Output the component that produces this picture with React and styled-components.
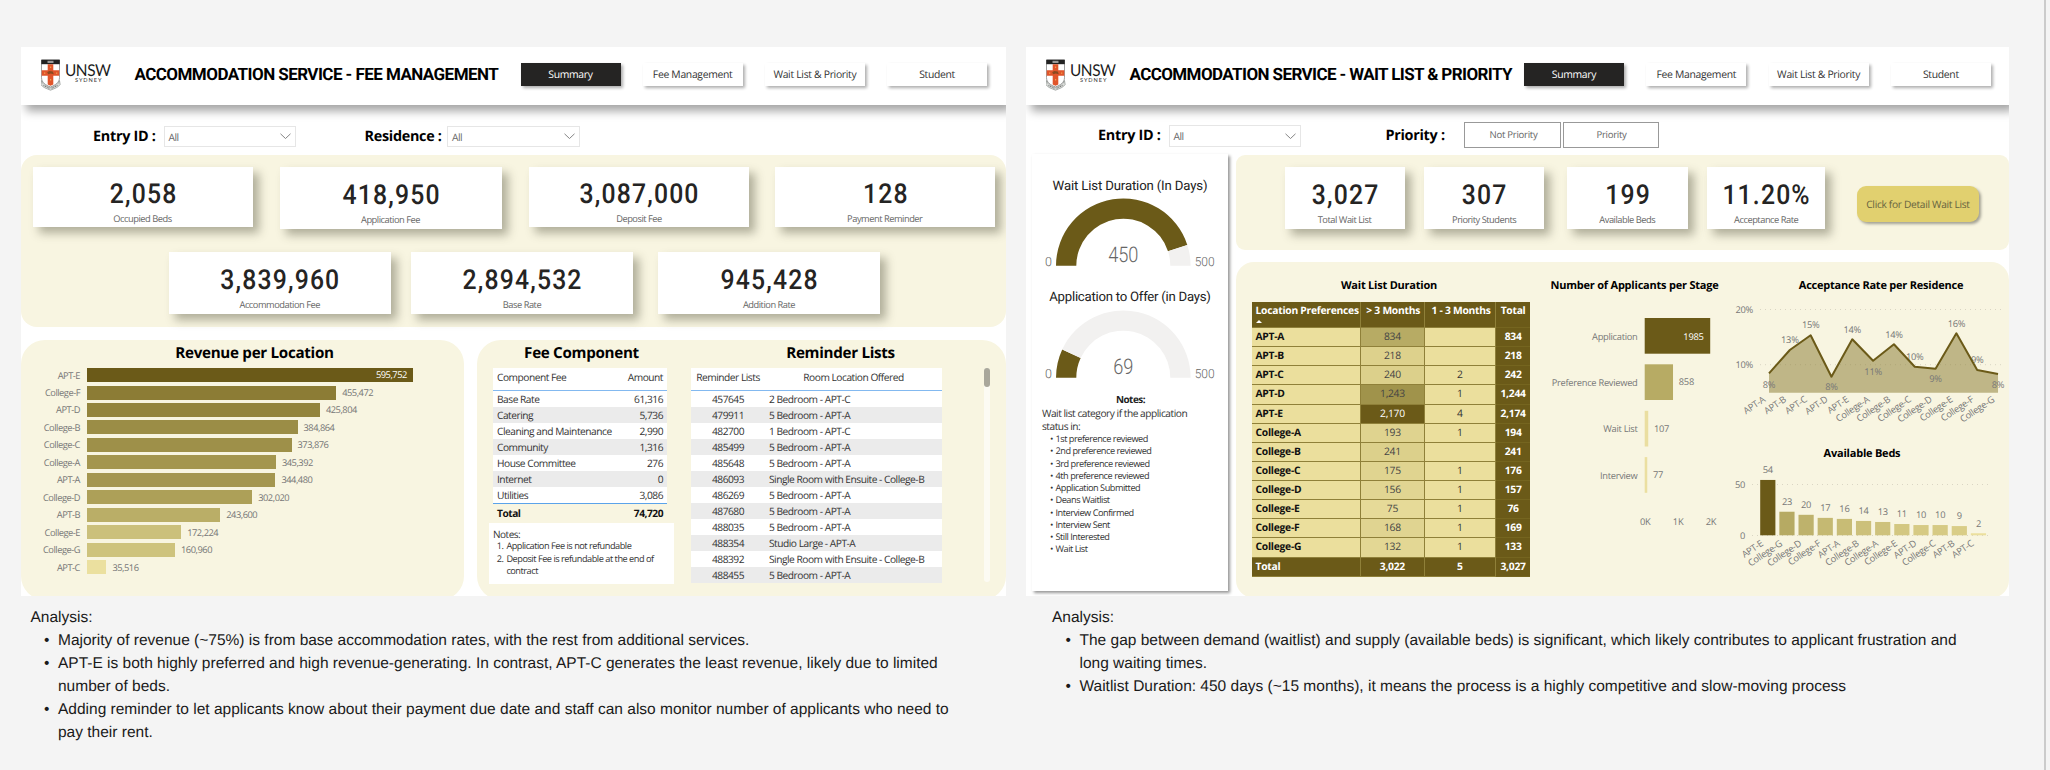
import React from "react";
import styled, { createGlobalStyle, css } from "styled-components";

const sans = `"Open Sans", "Noto Sans", sans-serif`;
const din = `Roboto, "Liberation Sans", sans-serif`;
const dark = "#6b5a18";
const cream = "#f8f5e1";
const pale = "#ebdf9d";

const GlobalStyle = createGlobalStyle`
  * { box-sizing: border-box; }
  body { margin: 0; background: #f4f4f4; text-rendering: geometricPrecision; }
  button { text-rendering: inherit; }
`;

const Page = styled.main`
  width: 2050px;
  height: 770px;
  display: flex;
  align-items: flex-start;
  background: #f4f4f4;
  padding-left: 21px;
  font-family: ${sans};
  letter-spacing: -0.03em;
  overflow: hidden;
  white-space: nowrap;
`;

const Slide = styled.section`
  width: ${(p) => p.$w}px;
  margin-right: ${(p) => p.$gap}px;
  padding-top: 47px;
  flex: none;
`;

const PageEdge = styled.div`
  width: 2px;
  height: 770px;
  background: #cbcbcb;
  flex: none;
`;

const Dashboard = styled.div`
  height: 549px;
  background: #fff;
  overflow: hidden;
`;

const Header = styled.header`
  position: relative;
  z-index: 1;
  height: 58px;
  background: #fff;
  box-shadow: 5px 6px 9px rgba(0, 0, 0, 0.36);
  display: flex;
  align-items: flex-start;
`;

const Logo = styled.svg`
  flex: none;
  margin: 12px 0 0 20px;
  width: 72px;
  height: 33px;
`;

const Title = styled.h1`
  flex: none;
  width: ${(p) => p.$w}px;
  margin: 15px 0 0 ${(p) => p.$ml}px;
  font: 700 17px/26px ${din};
  letter-spacing: ${(p) => p.$ls}px;
  color: #000;
`;

const Nav = styled.nav`
  display: flex;
  gap: ${(p) => p.$gap}px;
  margin-top: 16px;
`;

const NavButton = styled.button`
  flex: none;
  width: ${(p) => p.$w}px;
  height: 23px;
  border: 0;
  padding: 0;
  background: ${(p) => (p.$active ? "#252423" : "#fff")};
  color: ${(p) => (p.$active ? "#fff" : "#333")};
  box-shadow: 2px 2px 3px rgba(0, 0, 0, 0.32);
  font: 400 10.4px/24px ${sans};
  letter-spacing: -0.03em;
`;

const Filters = styled.div`
  display: flex;
  height: ${(p) => p.$h}px;
  padding-top: ${(p) => p.$top}px;
  align-items: flex-start;
`;

const FilterLabel = styled.label`
  flex: none;
  width: ${(p) => p.$w}px;
  margin-left: ${(p) => p.$ml}px;
  font-weight: 700;
  font-size: 14.4px;
  line-height: 22px;
  letter-spacing: -0.02em;
  color: #000;
`;

const Select = styled.div`
  flex: none;
  width: 132.5px;
  height: 21.5px;
  border: 1px solid #e6e6e6;
  display: flex;
  justify-content: space-between;
  align-items: center;
  padding: 1px 4px 0 4px;
  font-size: 10.2px;
  color: #666;
`;

const SlicerButton = styled.button`
  flex: none;
  width: ${(p) => p.$w}px;
  height: 26px;
  margin: -3px 1.5px 0 0;
  border: 1px solid #999;
  background: #fff;
  color: #666;
  font: 400 9.6px/24px ${sans};
  letter-spacing: -0.03em;
  padding: 0 0 0 2px;
`;

const KpiPanel = styled.div`
  height: ${(p) => p.$h}px;
  border-radius: ${(p) => p.$r}px;
  background: ${cream};
  padding-top: 12px;
`;

const KpiRow = styled.div`
  display: flex;
  align-items: flex-start;
  height: ${(p) => p.$h}px;
  padding-left: ${(p) => p.$pl}px;
`;

const Card = styled.div`
  flex: none;
  width: ${(p) => p.$w}px;
  height: ${(p) => p.$h}px;
  margin-right: ${(p) => p.$mr || 0}px;
  background: #fff;
  box-shadow: 6px 6px 9px rgba(60, 60, 40, 0.38);
  text-align: center;
  padding-top: ${(p) => p.$pt || 10}px;
`;

const CardValue = styled.div`
  font: 500 27.5px/33px ${din};
  letter-spacing: 1.3px;
  padding-left: 1.3px;
  transform: scaleX(0.9);
  color: #252423;
`;

const CardLabel = styled.div`
  font-size: 9.3px;
  line-height: 14px;
  margin-top: 1.5px;
  color: #666;
`;

const Lower = styled.div`
  display: flex;
  align-items: flex-start;
  margin-top: ${(p) => p.$top}px;
`;

const Panel = styled.div`
  flex: none;
  width: ${(p) => p.$w}px;
  height: ${(p) => p.$h}px;
  border-radius: ${(p) => p.$r}px;
  background: ${cream};
  padding-top: ${(p) => p.$pt || 0}px;
  margin-left: ${(p) => p.$ml || 0}px;
`;

const PanelTitle = styled.h2`
  margin: 0;
  font: 700 ${(p) => p.$size || 15.2}px/20px ${sans};
  letter-spacing: -0.02em;
  text-align: center;
  color: #000;
  padding: 0 ${(p) => p.$pr || 0}px 0 ${(p) => p.$pl || 0}px;
`;

const BarList = styled.div`
  padding: 3.8px 0 0 0;
`;

const BarRow = styled.div`
  display: flex;
  align-items: center;
  height: 17.47px;
  font-size: 9.3px;
  color: #777;
`;

const BarName = styled.div`
  width: 59px;
  margin-right: 7px;
  text-align: right;
`;

const Bar = styled.div`
  height: 14px;
  line-height: 14px;
  text-align: right;
  color: #fff;
  padding-right: 6px;
`;

const BarValue = styled.div`
  padding-left: 6px;
`;

const Split = styled.div`
  display: flex;
  align-items: flex-start;
`;

const Block = styled.div`
  flex: none;
  width: ${(p) => p.$w}px;
  margin-left: ${(p) => p.$ml}px;
`;

const PlainTable = styled.div`
  width: ${(p) => p.$w}px;
  margin: 5.5px 0 0 ${(p) => p.$ml || 0}px;
  font-size: 10.2px;
  color: #333;
`;

const PlainRow = styled.div`
  display: grid;
  grid-template-columns: ${(p) => p.$cols};
  height: 16.05px;
  line-height: 16.5px;
  background: ${(p) => (p.$alt ? "#ebebeb" : "#fff")};
  ${(p) =>
    p.$head &&
    css`
      height: 22.6px;
      line-height: 18.5px;
      border-bottom: 1px solid #83b9f0;
    `}
  ${(p) =>
    p.$total &&
    css`
      height: 20px;
      line-height: 18px;
      background: none;
      border-top: 1px solid #5ba3ea;
      font-weight: 700;
      color: #111;
    `}
`;

const Cell = styled.div`
  text-align: ${(p) => p.$align || "left"};
  padding: 0 ${(p) => p.$pr || 0}px 0 ${(p) => p.$pl || 0}px;
`;

const FeeNotes = styled.div`
  width: 185px;
  height: 61.5px;
  background: #fff;
  padding: 5.5px 0 0 4.5px;
  font-size: 9.2px;
  line-height: 12.5px;
  color: #333;
`;

const NotesHead = styled.div`
  font-size: 10px;
  line-height: 12px;
`;

const NotesItem = styled.div`
  display: grid;
  grid-template-columns: 9.6px 1fr;
  padding-left: 3.8px;
`;

const ScrollTrack = styled.div`
  width: 6px;
  height: 214px;
  margin: 25.5px 0 0 42px;
  border-radius: 3px;
  background: #fcfbf3;
`;

const ScrollThumb = styled.div`
  height: 18.5px;
  border-radius: 3px;
  background: #a9a79b;
`;

const Analysis = styled.div`
  font: 400 15.5px/23px "Liberation Sans", Arial, sans-serif;
  letter-spacing: 0;
  color: #1a1a1a;
  padding: 10px 0 0 ${(p) => p.$pl}px;
`;

const AnalysisItem = styled.div`
  display: grid;
  grid-template-columns: 14px 1fr;
  padding-left: 13.5px;
`;

const Columns = styled.div`
  display: flex;
  align-items: flex-start;
`;

const SidePanel = styled.aside`
  flex: none;
  width: 196px;
  height: 437px;
  margin: -1px 7.5px 0 6px;
  background: #fff;
  box-shadow: 2px 2px 3px rgba(0, 0, 0, 0.42);
  padding: 23px 0 0 0;
`;

const GaugeTitle = styled.div`
  font: 400 13.2px/20px ${din};
  letter-spacing: ${(p) => p.$ls}px;
  text-align: center;
  color: #222;
`;

const Gauge = styled.svg`
  display: block;
  width: 196px;
  height: 90.5px;
  margin-top: ${(p) => p.$mt || 0}px;
  font-family: ${din};
  font-weight: 300;
  letter-spacing: 0;
`;

const SideNotes = styled.div`
  margin-top: -7.5px;
  padding-left: 10px;
  font-size: 10.2px;
  line-height: 13px;
  color: #333;
`;

const SideNotesTitle = styled.div`
  width: 177px;
  text-align: center;
  font-weight: 700;
  font-size: 9.9px;
  line-height: 15px;
  color: #222;
`;

const Bullet = styled.div`
  display: grid;
  grid-template-columns: 5.5px 1fr;
  padding-left: 8px;
  font-size: 9.2px;
  line-height: 12.25px;
`;

const Main = styled.div`
  width: 773.5px;
  flex: none;
`;

const DetailButton = styled.button`
  flex: none;
  width: 121.5px;
  height: 35.5px;
  margin: 19px 0 0 32px;
  padding: 0;
  border: 0;
  border-radius: 9px;
  background: #e1d06f;
  box-shadow: 2px 2px 3px rgba(0, 0, 0, 0.35);
  color: #66633f;
  font: 400 10.2px/36px ${sans};
  letter-spacing: -0.03em;
`;

const MatrixBox = styled.div`
  flex: none;
  width: 279px;
  margin: 0 0 0 16px;
`;

const Matrix = styled.div`
  margin-top: 6px;
  font-size: 10.3px;
  color: #333;
`;

const MatrixRow = styled.div`
  display: grid;
  grid-template-columns: 109.2px 64.4px 70.6px 34.8px;
  height: ${(p) => (p.$head ? 26 : 19.13)}px;
  line-height: ${(p) => (p.$head ? 19 : 18)}px;
`;

const MatrixCell = styled.div`
  background: ${(p) => p.$bg || pale};
  color: ${(p) => p.$fg || "#333"};
  font-weight: ${(p) => (p.$bold ? 700 : 400)};
  letter-spacing: ${(p) => (p.$bold ? "-0.025em" : "-0.03em")};
  text-align: ${(p) => p.$align || "center"};
  padding: 0 ${(p) => p.$pr || 0}px 0 ${(p) => p.$pl || 0}px;
  border-right: ${(p) => (p.$last ? "0" : "1px solid #8f8039")};
  border-bottom: 1px solid ${(p) => (p.$last ? "#75651f" : "#8f8039")};
`;

const SortArrow = styled.div`
  width: 0;
  height: 0;
  margin-top: -1px;
  border: 3.5px solid transparent;
  border-top: 0;
  border-bottom: 3.5px solid #fff;
`;

const StageBox = styled.div`
  flex: none;
  width: 204px;
`;

const RatesBox = styled.div`
  flex: none;
  width: 275px;
`;

const Chart = styled.svg`
  display: block;
  margin-top: ${(p) => p.$mt || 0}px;
  font-family: ${sans};
  font-size: 9.3px;
  letter-spacing: -0.03em;
`;

function UnswLogo() {
  return (
    <Logo viewBox="0 0 72 33">
      <path d="M0.5 1h18v17.500c0 5-4 7.500-9 9.500c-5-2-9-4.500-9-9.500z" fill="#fff" stroke="#777" strokeWidth="0.7" />
      <path d="M0.300 0.700h18.500v4.500h-18.500z" fill="#222" />
      <path d="M6.500 1.800h6v2.200h-6z" fill="#999" />
      <path d="M6.700 5.300h5.600v6h6v5.400h-6v8.800l-2.800 1.200l-2.800-1.200v-8.800h-6v-5.400h6z" fill="#e0552b" />
      <path d="M6.200 13.300l2-1.300l3.600 0.600l1 2.600l-3-0.700l-2.600 0.800z" fill="#8a4a20" />
      <path d="M9 7.500h1.200v1.500h-1.200zM9 20h1.200v1.500h-1.200zM3 13.500h1.300v1.300h-1.300zM15 13.500h1.300v1.300h-1.300z" fill="#f0a050" />
      <path d="M0.500 21.500c1 4 4.500 5.500 9 7.200c4.500-1.700 8-3.200 9-7.200l0.700 4c-2 3-5.500 4-9.700 5.700c-4.200-1.700-7.700-2.700-9.700-5.700z" fill="#dcdedb" stroke="#7d8582" strokeWidth="0.6" />
      <path d="M2.500 26.500l6.500 3.300M16.500 26.500l-6.500 3.300" stroke="#555" strokeWidth="0.800" strokeDasharray="1 0.800" />
      <text x="24" y="17.300" fontFamily="Lato, sans-serif" fontSize="16.300" fill="#1c1c1c" textLength="45.500" lengthAdjust="spacingAndGlyphs">UNSW</text>
      <text x="34" y="23.100" fontFamily="Lato, sans-serif" fontSize="5.600" fill="#333" textLength="26" lengthAdjust="spacing">SYDNEY</text>
    </Logo>
  );
}

function Dropdown() {
  return (
    <Select>
      <span>All</span>
      <svg width="11" height="7" viewBox="0 0 11 7">
        <path d="M0.500 0.800l5 4.700l5-4.700" fill="none" stroke="#777" strokeWidth="0.9" />
      </svg>
    </Select>
  );
}

function TopBar({ title, titleWidth, titleMargin, spacing, gap, buttonWidth }) {
  return (
    <Header>
      <UnswLogo />
      <Title $w={titleWidth} $ml={titleMargin} $ls={spacing}>{title}</Title>
      <Nav $gap={gap}>
        {["Summary", "Fee Management", "Wait List & Priority", "Student"].map((t, i) => (
          <NavButton key={t} $active={i === 0} $w={buttonWidth}>{t}</NavButton>
        ))}
      </Nav>
    </Header>
  );
}

function Kpi({ value, label, w, h, mr, pt }) {
  return (
    <Card $w={w} $h={h} $mr={mr} $pt={pt}>
      <CardValue>{value}</CardValue>
      <CardLabel>{label}</CardLabel>
    </Card>
  );
}

const revenue = [
  ["APT-E", 595752, "#6b5a18"],
  ["College-F", 455472, "#8c7c35"],
  ["APT-D", 425804, "#93843d"],
  ["College-B", 384864, "#9b8d46"],
  ["College-C", 373876, "#9e9049"],
  ["College-A", 345392, "#a4964f"],
  ["APT-A", 344480, "#a4964f"],
  ["College-D", 302020, "#ada058"],
  ["APT-B", 243600, "#baae67"],
  ["College-E", 172224, "#cbc07b"],
  ["College-G", 160960, "#cec37d"],
  ["APT-C", 35516, "#ebe09f"],
];

const fees = [
  ["Base Rate", "61,316"],
  ["Catering", "5,736"],
  ["Cleaning and Maintenance", "2,990"],
  ["Community", "1,316"],
  ["House Committee", "276"],
  ["Internet", "0"],
  ["Utilities", "3,086"],
];

const reminders = [
  ["457645", "2 Bedroom - APT-C"],
  ["479911", "5 Bedroom - APT-A"],
  ["482700", "1 Bedroom - APT-C"],
  ["485499", "5 Bedroom - APT-A"],
  ["485648", "5 Bedroom - APT-A"],
  ["486093", "Single Room with Ensuite - College-B"],
  ["486269", "5 Bedroom - APT-A"],
  ["487680", "5 Bedroom - APT-A"],
  ["488035", "5 Bedroom - APT-A"],
  ["488354", "Studio Large - APT-A"],
  ["488392", "Single Room with Ensuite - College-B"],
  ["488455", "5 Bedroom - APT-A"],
];

const feeCols = "120px 1fr";
const reminderCols = "74px 1fr";

function FeeDashboard() {
  return (
    <Dashboard>
      <TopBar title="ACCOMMODATION SERVICE - FEE MANAGEMENT" titleWidth={386} titleMargin={21.500} spacing={-0.55} gap={22.200} buttonWidth={100} />
      <Filters $h={50} $top={20.500}>
        <FilterLabel $ml={72} $w={70.500}>Entry ID :</FilterLabel>
        <Dropdown />
        <FilterLabel $ml={68.500} $w={82.500}>Residence :</FilterLabel>
        <Dropdown />
      </Filters>
      <KpiPanel $h={172} $r={16}>
        <KpiRow $h={85} $pl={11.500}>
          <Kpi value="2,058" label="Occupied Beds" w={220} h={60} mr={27} />
          <Kpi value="418,950" label="Application Fee" w={222} h={62} mr={27.500} pt={11} />
          <Kpi value="3,087,000" label="Deposit Fee" w={220} h={60} mr={25.500} />
          <Kpi value="128" label="Payment Reminder" w={220.500} h={60} />
        </KpiRow>
        <KpiRow $h={75} $pl={148}>
          <Kpi value="3,839,960" label="Accommodation Fee" w={221.500} h={62} mr={20.500} pt={11} />
          <Kpi value="2,894,532" label="Base Rate" w={222} h={62} mr={25} pt={11} />
          <Kpi value="945,428" label="Addition Rate" w={222} h={62} pt={11} />
        </KpiRow>
      </KpiPanel>
      <Lower $top={12.500}>
        <Panel $w={443} $h={260} $r={24} $pt={3}>
          <PanelTitle $pl={24}>Revenue per Location</PanelTitle>
          <RevenueBars />
        </Panel>
        <Panel $w={529.500} $h={260} $r={24} $ml={12.500} $pt={3}>
          <Split>
            <Block $ml={12} $w={186}>
              <PanelTitle>Fee Component</PanelTitle>
              <PlainTable $w={174} $ml={4.500}>
                <PlainRow $head $cols={feeCols}>
                  <Cell $pl={4}>Component Fee</Cell>
                  <Cell $align="right" $pr={4}>Amount</Cell>
                </PlainRow>
                {fees.map(([n, v], i) => (
                  <PlainRow key={n} $alt={i % 2 === 1} $cols={feeCols}>
                    <Cell $pl={4}>{n}</Cell>
                    <Cell $align="right" $pr={4}>{v}</Cell>
                  </PlainRow>
                ))}
                <PlainRow $total $cols={feeCols}>
                  <Cell $pl={4}>Total</Cell>
                  <Cell $align="right" $pr={4}>74,720</Cell>
                </PlainRow>
              </PlainTable>
              <FeeNotes>
                <NotesHead>Notes:</NotesHead>
                <NotesItem><span>1.</span><span>Application Fee is not refundable</span></NotesItem>
                <NotesItem><span>2.</span><span>Deposit Fee is refundable at the end of<br />contract</span></NotesItem>
              </FeeNotes>
            </Block>
            <Block $ml={16.500} $w={251}>
              <PanelTitle $pl={48}>Reminder Lists</PanelTitle>
              <PlainTable $w={251}>
                <PlainRow $head $cols={reminderCols}>
                  <Cell $align="center">Reminder Lists</Cell>
                  <Cell $align="center">Room Location Offered</Cell>
                </PlainRow>
                {reminders.map(([id, room], i) => (
                  <PlainRow key={id} $alt={i % 2 === 1} $cols={reminderCols}>
                    <Cell $align="center">{id}</Cell>
                    <Cell $pl={4}>{room}</Cell>
                  </PlainRow>
                ))}
              </PlainTable>
            </Block>
            <ScrollTrack><ScrollThumb /></ScrollTrack>
          </Split>
        </Panel>
      </Lower>
    </Dashboard>
  );
}

function RevenueBars() {
  return (
    <BarList>
      {revenue.map(([name, value, color], i) => (
        <BarRow key={name}>
          <BarName>{name}</BarName>
          <Bar style={{ width: value * 0.000547, background: color }}>{i === 0 ? value.toLocaleString("en-US") : ""}</Bar>
          {i > 0 && <BarValue>{value.toLocaleString("en-US")}</BarValue>}
        </BarRow>
      ))}
    </BarList>
  );
}

function HalfGauge({ share, value, mt }) {
  const point = (r, a) => `${91.3 - r * Math.cos(a)} ${68.7 - r * Math.sin(a)}`;
  const arc = (from, to) =>
    `M${point(67.3, from)}A67.3 67.3 0 0 1 ${point(67.3, to)}L${point(47, to)}A47 47 0 0 0 ${point(47, from)}Z`;
  const split = Math.PI * share;
  return (
    <Gauge viewBox="0 0 196 90.5" $mt={mt}>
      <path d={arc(0, split)} fill={dark} />
      <path d={arc(split, Math.PI)} fill="#f2f1f0" />
      <text x="91.300" y="64.500" textAnchor="middle" fontSize="21.500" fill="#666" textLength={value.length * 10.1} lengthAdjust="spacingAndGlyphs">{value}</text>
      <text x="13" y="69" fontSize="12.500" fill="#666">0</text>
      <text x="162.700" y="69" fontSize="12.500" fill="#666" textLength="20" lengthAdjust="spacingAndGlyphs">500</text>
    </Gauge>
  );
}

const waitNotes = [
  "1st preference reviewed", "2nd preference reviewed", "3rd preference reviewed", "4th preference reviewed",
  "Application Submitted", "Deans Waitlist", "Interview Confirmed", "Interview Sent", "Still Interested", "Wait List",
];

const matrix = [
  ["APT-A", "834", "", "834", "#b7ab64"],
  ["APT-B", "218", "", "218", "#ddd18c"],
  ["APT-C", "240", "2", "242", "#dcd08b"],
  ["APT-D", "1,243", "1", "1,244", "#a0934b"],
  ["APT-E", "2,170", "4", "2,174", "#6b5a18"],
  ["College-A", "193", "1", "194", "#dfd38f"],
  ["College-B", "241", "", "241", "#dcd08b"],
  ["College-C", "175", "1", "176", "#e0d490"],
  ["College-D", "156", "1", "157", "#e1d592"],
  ["College-E", "75", "1", "76", "#e6da98"],
  ["College-F", "168", "1", "169", "#e0d491"],
  ["College-G", "132", "1", "133", "#e3d794"],
];

function WaitMatrix() {
  const solid = { $bg: dark, $fg: "#fff", $bold: true };
  return (
    <Matrix>
      <MatrixRow $head>
        <MatrixCell {...solid} $align="left" $pl={4}>Location Preferences<SortArrow /></MatrixCell>
        <MatrixCell {...solid} $align="right" $pr={4}>&gt; 3 Months</MatrixCell>
        <MatrixCell {...solid} $align="right" $pr={4}>1 - 3 Months</MatrixCell>
        <MatrixCell {...solid} $last>Total</MatrixCell>
      </MatrixRow>
      {matrix.map(([name, long, short, total, bg]) => (
        <MatrixRow key={name}>
          <MatrixCell $bold $fg="#111" $align="left" $pl={4}>{name}</MatrixCell>
          <MatrixCell $bg={bg} $fg={bg === dark ? "#fff" : "#444"}>{long}</MatrixCell>
          <MatrixCell>{short}</MatrixCell>
          <MatrixCell {...solid} $last>{total}</MatrixCell>
        </MatrixRow>
      ))}
      <MatrixRow>
        <MatrixCell {...solid} $align="left" $pl={4}>Total</MatrixCell>
        <MatrixCell {...solid}>3,022</MatrixCell>
        <MatrixCell {...solid}>5</MatrixCell>
        <MatrixCell {...solid} $last>3,027</MatrixCell>
      </MatrixRow>
    </Matrix>
  );
}

const stages = [
  ["Application", 1985, 21, dark],
  ["Preference Reviewed", 858, 67.3, "#b7ab64"],
  ["Wait List", 107, 113.8, "#eadea0"],
  ["Interview", 77, 160.1, "#ebdfa0"],
];

function StageChart() {
  return (
    <Chart $mt={1} width="204" height="240" viewBox="0 0 204 240">
      {stages.map(([name, n, y, fill], i) => {
        const w = Math.max(n * 0.033, 2.5);
        return (
          <g key={name}>
            <text x="106.500" y={y + 21.5} textAnchor="end" fill="#777">{name}</text>
            <rect x="113.700" y={y} width={w} height="35.700" fill={fill} />
            {i === 0
              ? <text x="172.500" y={y + 21.5} textAnchor="end" fill="#fff">{n}</text>
              : <text x={113.5 + w + 6} y={y + 21} fill="#777">{n}</text>}
          </g>
        );
      })}
      {["0K", "1K", "2K"].map((t, i) => (
        <text key={t} x={114.3 + i * 32.8} y="228" textAnchor="middle" fill="#777">{t}</text>
      ))}
    </Chart>
  );
}

const rates = [
  ["APT-A", 76.3, "8%", 87.3], ["APT-B", 53, "13%", 42.7], ["APT-C", 38.3, "15%", 27.7], ["APT-D", 79.7, "8%", 90],
  ["APT-E", 42.3, "14%", 32.3], ["College-A", 63.7, "11%", 74.3], ["College-B", 47.3, "14%", 37.3], ["College-C", 69.7, "10%", 59.3],
  ["College-D", 71.7, "9%", 82], ["College-E", 36.3, "16%", 26.3], ["College-F", 73, "9%", 62.7], ["College-G", 77, "8%", 87.7],
];

function RateChart() {
  const x = (i) => 34 + i * 20.82;
  const line = rates.map((r, i) => `${x(i)},${r[1]}`).join(" ");
  return (
    <Chart $mt={1} width="275" height="147" viewBox="0 0 275 147">
      <text x="18" y="15.600" textAnchor="end" fill="#777">20%</text>
      <text x="18" y="71" textAnchor="end" fill="#777">10%</text>
      <path d="M25 12.500h245M25 67.700h245" stroke="#d9d5c3" strokeDasharray="1 4" />
      <polygon points={`${x(0)},95.7 ${line} ${x(11)},95.7`} fill="#8a7d33" fillOpacity="0.52" />
      {rates.map(([name, , label, ly], i) => (
        <text key={name} x={x(i)} y={ly + 3.2} textAnchor="middle" fill="#777">{label}</text>
      ))}
      <polyline points={line} fill="none" stroke={dark} strokeWidth="2" strokeLinejoin="round" />
      {rates.map(([name], i) => (
        <text key={name} transform={`translate(${x(i) - 3} 104) rotate(-34)`} textAnchor="end" fill="#777">{name}</text>
      ))}
    </Chart>
  );
}

const beds = [
  ["APT-E", 54, "#6b5a18"], ["College-G", 23, "#b6aa63"], ["College-D", 20, "#beb26c"], ["College-F", 17, "#c5b972"],
  ["APT-A", 16, "#c8bc75"], ["College-B", 14, "#ccc07a"], ["College-A", 13, "#cec27c"], ["College-E", 11, "#d3c781"],
  ["APT-D", 10, "#d6ca84"], ["College-C", 10, "#d6ca84"], ["APT-B", 9, "#d9cd87"], ["APT-C", 2, "#ebdf9d"],
];

function BedsChart() {
  const x = (i) => 32.8 + i * 19.15;
  return (
    <Chart width="275" height="120" viewBox="0 0 275 120">
      <text x="10" y="23.600" textAnchor="end" fill="#777">50</text>
      <text x="10" y="74.600" textAnchor="end" fill="#777">0</text>
      <path d="M17 20.500h240M17 71.500h240" stroke="#d9d5c3" strokeDasharray="1 4" />
      {beds.map(([name, n, fill], i) => {
        const h = n * 1.025;
        return (
          <g key={name}>
            <rect x={x(i) - 7.6} y={71.3 - h} width="15.200" height={h} fill={fill} />
            <text x={x(i)} y={71.3 - h - 6.7} textAnchor="middle" fill="#777">{n}</text>
            <text transform={`translate(${x(i) - 4} 81) rotate(-34)`} textAnchor="end" fill="#777">{name}</text>
          </g>
        );
      })}
    </Chart>
  );
}

function WaitDashboard() {
  return (
    <Dashboard>
      <TopBar title="ACCOMMODATION SERVICE - WAIT LIST & PRIORITY" titleWidth={394.500} titleMargin={11.500} spacing={-0.6} gap={22.300} buttonWidth={100} />
      <Filters $h={50} $top={20}>
        <FilterLabel $ml={72} $w={70.500}>Entry ID :</FilterLabel>
        <Dropdown />
        <FilterLabel $ml={84.500} $w={78.500}>Priority :</FilterLabel>
        <SlicerButton $w={97}>Not Priority</SlicerButton>
        <SlicerButton $w={96}>Priority</SlicerButton>
      </Filters>
      <Columns>
        <SidePanel>
          <GaugeTitle $ls={-0.15}>Wait List Duration (In Days)</GaugeTitle>
          <HalfGauge share={0.9} value="450" />
          <GaugeTitle $ls={-0.25}>Application to Offer (in Days)</GaugeTitle>
          <HalfGauge share={0.138} value="69" mt={1.500} />
          <SideNotes>
            <SideNotesTitle>Notes:</SideNotesTitle>
            Wait list category if the application<br />status in:
            {waitNotes.map((t) => (
              <Bullet key={t}><span>•</span><span>{t}</span></Bullet>
            ))}
          </SideNotes>
        </SidePanel>
        <Main>
          <KpiPanel $h={95} $r={9}>
            <KpiRow $h={80} $pl={49}>
              <Kpi value="3,027" label="Total Wait List" w={120} h={61.500} mr={19.700} pt={11} />
              <Kpi value="307" label="Priority Students" w={120} h={61.500} mr={22.600} pt={11} />
              <Kpi value="199" label="Available Beds" w={121} h={61.500} mr={19.400} pt={11} />
              <Kpi value="11.20%" label="Acceptance Rate" w={118} h={61.500} pt={11} />
              <DetailButton>Click for Detail Wait List</DetailButton>
            </KpiRow>
          </KpiPanel>
          <Lower $top={12}>
            <Panel $w={773.500} $h={336} $r={18} $pt={14}>
              <Columns>
                <MatrixBox>
                  <PanelTitle $size={11} $pr={4}>Wait List Duration</PanelTitle>
                  <WaitMatrix />
                </MatrixBox>
                <StageBox>
                  <PanelTitle $size={11} $pl={4}>Number of Applicants per Stage</PanelTitle>
                  <StageChart />
                </StageBox>
                <RatesBox>
                  <PanelTitle $size={11} $pl={18}>Acceptance Rate per Residence</PanelTitle>
                  <RateChart />
                  <PanelTitle $size={11} $pr={20}>Available Beds</PanelTitle>
                  <BedsChart />
                </RatesBox>
              </Columns>
            </Panel>
          </Lower>
        </Main>
      </Columns>
    </Dashboard>
  );
}

export default function App() {
  return (
    <Page>
      <GlobalStyle />
      <Slide $w={985} $gap={20}>
        <FeeDashboard />
        <Analysis $pl={9.500}>
          Analysis:
          <AnalysisItem><span>•</span><span>Majority of revenue (~75%) is from base accommodation rates, with the rest from additional services.</span></AnalysisItem>
          <AnalysisItem><span>•</span><span>APT-E is both highly preferred and high revenue-generating. In contrast, APT-C generates the least revenue, likely due to limited<br />number of beds.</span></AnalysisItem>
          <AnalysisItem><span>•</span><span>Adding reminder to let applicants know about their payment due date and staff can also monitor number of applicants who need to<br />pay their rent.</span></AnalysisItem>
        </Analysis>
      </Slide>
      <Slide $w={983} $gap={35}>
        <WaitDashboard />
        <Analysis $pl={26}>
          Analysis:
          <AnalysisItem><span>•</span><span>The gap between demand (waitlist) and supply (available beds) is significant, which likely contributes to applicant frustration and<br />long waiting times.</span></AnalysisItem>
          <AnalysisItem><span>•</span><span>Waitlist Duration: 450 days (~15 months), it means the process is a highly competitive and slow-moving process</span></AnalysisItem>
        </Analysis>
      </Slide>
      <PageEdge />
    </Page>
  );
}
